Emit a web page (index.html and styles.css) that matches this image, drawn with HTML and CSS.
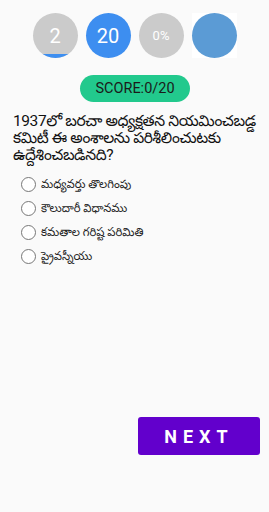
FILE: index.html
```html
<!DOCTYPE html>
<html lang="te">
<head>
  <meta charset="UTF-8" />
  <title>Quiz</title>
  <link rel="stylesheet" href="styles.css">
</head>
<body>
  <div class="stats">
    <div class="ball gray"><span>2</span><div class="level"></div></div>
    <div class="ball blue"><span>20</span></div>
    <div class="ball gray small"><span>0%</span></div>
    <div class="ball-box"><div class="ball steel"></div></div>
  </div>

  <div class="score-row"><div class="score">SCORE:0/20</div></div>

  <p class="question">1937లో బరచా అధ్యక్షతన నియమించబడ్డ కమిటీ ఈ అంశాలను పరిశీలించుటకు ఉద్దేశించబడినది?</p>

  <form class="options">
    <label class="opt"><input type="radio" name="ans" /> మధ్యవర్తు తొలగింపు</label>
    <label class="opt"><input type="radio" name="ans" /> కౌలుదారీ విధానము</label>
    <label class="opt"><input type="radio" name="ans" /> కమతాల గరిష్ట పరిమితి</label>
    <label class="opt"><input type="radio" name="ans" /> ప్రైవస్నీయు</label>
  </form>

  <div class="footer"><button class="next" type="button">NEXT</button></div>
</body>
</html>
```

FILE: styles.css
```css
body { margin: 0; background: #fafafa; font-family: Roboto, "Noto Sans Telugu", "Noto Sans", sans-serif; height: 512px; display: flex; flex-direction: column; }
.stats { display: flex; justify-content: center; gap: 8px; padding-top: 13px; }
.ball { width: 45px; height: 45px; border-radius: 50%; display: flex; align-items: center; justify-content: center; color: #fff; font-size: 20px; position: relative; overflow: hidden; }
.ball span { position: relative; }
.gray { background: #cbcbcb; }
.blue { background: #3d8ef0; }
.small { font-size: 13px; }
.level { position: absolute; left: 0; right: 0; bottom: 0; height: 4px; background: #3d8ef0; }
.ball-box { background: #fff; }
.steel { background: #5b9bd5; }
.score-row { display: flex; justify-content: center; margin-top: 17px; padding-left: 1px; }
.score { background: #22c98d; border-radius: 14px; width: 110px; height: 27px; line-height: 27px; text-align: center; font-size: 14.5px; color: #1a1a1a; }
.question { margin: 11px 8px 0 13px; font-size: 15.5px; line-height: 17px; color: #111; letter-spacing: -0.4px; }
.options { margin: 11px 0 0 21px; display: flex; flex-direction: column; gap: 6px; }
.opt { display: flex; align-items: center; gap: 5px; font-size: 11.5px; height: 18px; line-height: 18px; color: #222; }
.opt input { margin: 0; width: 15px; height: 15px; }
.footer { margin-top: auto; display: flex; justify-content: flex-end; padding: 0 9px 57px 0; }
.next { width: 122px; height: 38px; background: #6200cc; color: #fff; border: none; border-radius: 3px; font-family: Roboto, sans-serif; font-weight: bold; font-size: 18px; letter-spacing: 6px; padding-left: 6px; }
```
